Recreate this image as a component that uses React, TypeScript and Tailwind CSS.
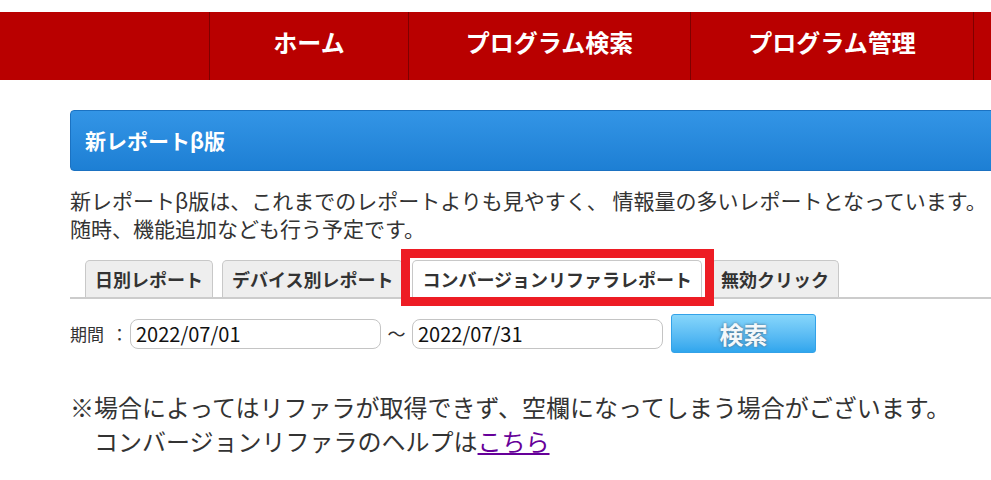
import React from "react";

const FONT = { fontFamily: '"Noto Sans CJK JP", "Noto Sans", sans-serif' };

function Tab({ label, active }: { label: string; active?: boolean }) {
  return (
    <div
      className={
        "h-[37px] px-[9px] flex items-center border border-b-0 border-[#c8c8c8] rounded-t-[5px] text-[18px] font-bold text-[#333] whitespace-nowrap " +
        (active ? "bg-white" : "bg-[#eeeeee]")
      }
    >
      {label}
    </div>
  );
}

export default function App() {
  return (
    <div className="w-[991px] h-[480px] overflow-hidden bg-white" style={FONT}>
      <div className="h-[12px]" />
      <nav className="flex h-[68px] bg-[#b90000] w-max text-white font-bold text-[24px] leading-none">
        <div className="w-[210px] border-r border-[#7e0000]" />
        <div className="w-[199px] border-r border-[#7e0000] flex items-center justify-center pb-[8px]">ホーム</div>
        <div className="w-[282px] border-r border-[#7e0000] flex items-center justify-center pb-[8px]">プログラム検索</div>
        <div className="w-[283px] border-r border-[#7e0000] flex items-center justify-center pb-[8px]">プログラム管理</div>
        <div className="w-[200px]" />
      </nav>
      <main className="ml-[70px] w-[960px] pt-[30px] text-[#333]">
        <div className="h-[61px] rounded-[4px] border border-[#1b72c2] bg-gradient-to-b from-[#3395e6] to-[#1d7fd4] flex items-center pl-[14px] text-white font-bold text-[21px]">
          新レポートβ版
        </div>
        <p className="mt-[15px] text-[21px] leading-[28px] whitespace-nowrap">
          新レポートβ版は、これまでのレポートよりも見やすく、 情報量の多いレポートとなっています。
          <br />
          随時、機能追加なども行う予定です。
        </p>
        <div className="relative mt-[18px] flex gap-[9px] pl-[15px] border-b-2 border-[#cccccc]">
          <Tab label="日別レポート" />
          <Tab label="デバイス別レポート" />
          <Tab label="コンバージョンリファラレポート" active />
          <Tab label="無効クリック" />
          <div className="absolute left-[331px] top-[-11px] w-[313px] h-[57px] border-[9px] border-[#ed1c24]" />
        </div>
        <div className="mt-[15px] flex items-center h-[39px]">
          <span className="text-[17px] text-[#333] w-[60px] whitespace-nowrap">
            期間<span className="ml-[7px]">：</span>
          </span>
          <div className="w-[251px] h-[30px] rounded-[8px] border border-[#c4c4c4] flex items-center pl-[5px] text-[20px] text-[#111]">
            2022/07/01
          </div>
          <span className="w-[31px] text-center text-[18px] text-[#333]">～</span>
          <div className="w-[251px] h-[30px] rounded-[8px] border border-[#c4c4c4] flex items-center pl-[5px] text-[20px] text-[#111]">
            2022/07/31
          </div>
          <div className="ml-[8px] w-[145px] h-[39px] rounded-[3px] border border-[#33a2e8] bg-gradient-to-b from-[#86d6fb] to-[#2fa6ed] flex items-center justify-center text-[#f4f8fb] font-bold text-[24px] [text-shadow:0_0_3px_rgba(70,90,110,0.9)]">
            検索
          </div>
        </div>
        <div className="mt-[37px] text-[24px] leading-[34px] text-[#333] whitespace-nowrap">
          ※場合によってはリファラが取得できず、空欄になってしまう場合がございます。
          <br />
          <span className="pl-[24px]">コンバージョンリファラのヘルプは</span>
          <a href="#" className="text-[#660099] underline">こちら</a>
        </div>
      </main>
    </div>
  );
}
